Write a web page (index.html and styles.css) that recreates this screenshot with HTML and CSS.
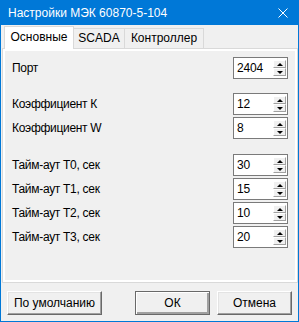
FILE: index.html
```html
<!DOCTYPE html>
<html lang="ru">
<head>
  <meta charset="UTF-8">
  <title>Настройки МЭК 60870-5-104</title>
  <link rel="stylesheet" href="styles.css">
</head>
<body>
  <div class="window">
    <div class="titlebar">
      <span class="title">Настройки МЭК 60870-5-104</span>
      <svg class="close" width="10" height="10" viewBox="0 0 10 10">
        <path d="M0.5 0.5 L9.5 9.5 M9.5 0.5 L0.5 9.5" stroke="#fff" stroke-width="1" fill="none"/>
      </svg>
    </div>

    <div class="tabs">
      <div class="tab active tab-main">Основные</div>
      <div class="tab tab-scada">SCADA</div>
      <div class="tab tab-ctrl">Контроллер</div>
    </div>

    <div class="frame">
      <div class="page">
        <div class="group">
          <div class="row">
            <span class="label">Порт</span>
            <div class="spin"><span class="value">2404</span><div class="spin-btns"><span class="up"></span><span class="down"></span></div></div>
          </div>
        </div>

        <div class="group group-k">
          <div class="row">
            <span class="label">Коэффициент К</span>
            <div class="spin"><span class="value">12</span><div class="spin-btns"><span class="up"></span><span class="down"></span></div></div>
          </div>
          <div class="row">
            <span class="label">Коэффициент W</span>
            <div class="spin"><span class="value">8</span><div class="spin-btns"><span class="up"></span><span class="down"></span></div></div>
          </div>
        </div>

        <div class="group group-t">
          <div class="row">
            <span class="label">Тайм-аут T0, сек</span>
            <div class="spin"><span class="value">30</span><div class="spin-btns"><span class="up"></span><span class="down"></span></div></div>
          </div>
          <div class="row">
            <span class="label">Тайм-аут T1, сек</span>
            <div class="spin"><span class="value">15</span><div class="spin-btns"><span class="up"></span><span class="down"></span></div></div>
          </div>
          <div class="row">
            <span class="label">Тайм-аут T2, сек</span>
            <div class="spin"><span class="value">10</span><div class="spin-btns"><span class="up"></span><span class="down"></span></div></div>
          </div>
          <div class="row">
            <span class="label">Тайм-аут T3, сек</span>
            <div class="spin"><span class="value">20</span><div class="spin-btns"><span class="up"></span><span class="down"></span></div></div>
          </div>
        </div>
      </div>
    </div>

    <div class="buttons">
      <button class="btn btn-default">По умолчанию</button>
      <button class="btn btn-ok">ОК</button>
      <button class="btn btn-cancel">Отмена</button>
    </div>
  </div>
</body>
</html>
```

FILE: styles.css
```css
:root {
  --win-blue: #0078d7;
  --face: #f0f0f0;
  --tab-border: #d9d9d9;
  --shadow: #a0a0a0;
  --dark-shadow: #696969;
}
* { margin: 0; padding: 0; box-sizing: border-box; }
body {
  font-family: 'Liberation Sans', Arial, sans-serif;
  font-size: 12px;
  color: #000;
  background: #fff;
}

.window {
  width: 299px;
  height: 322px;
  background: var(--face);
  border: 1px solid var(--win-blue);
  border-top: 0;
  display: flex;
  flex-direction: column;
}

/* title bar */
.titlebar {
  height: 25px;
  background: var(--win-blue);
  color: #fff;
  display: flex;
  align-items: center;
  padding-left: 7px;
}
.title { font-size: 12px; }
.close { margin-left: auto; margin-right: 10px; }

/* tabs */
.tabs {
  display: flex;
  align-items: flex-end;
  height: 23px;
  margin-top: 1px;
  margin-bottom: -1px;
  padding-left: 3px;
  position: relative;
  z-index: 1;
}
.tab {
  height: 20px;
  margin-bottom: 1px;
  margin-left: -1px;
  background: var(--face);
  border: 1px solid var(--tab-border);
  border-bottom: 0;
  text-align: center;
  line-height: 19px;
}
.tab.active {
  height: 23px;
  margin-bottom: 0;
  margin-left: 0;
  background: #fff;
  line-height: 21px;
}
.tab-main { width: 70px; }
.tab-scada { width: 52px; }
.tab-ctrl { width: 80px; }

.frame {
  height: 235px;
  margin-left: 1px;
  border: 1px solid var(--tab-border);
  background: #fff;
  padding: 2px;
}
.page {
  height: 100%;
  background: var(--face);
  padding: 6px 7px 0 7px;
}

.group { display: flex; flex-direction: column; gap: 2px; }
.group-k { margin-top: 14px; }
.group-t { margin-top: 15px; }
.row {
  height: 22px;
  display: flex;
  align-items: center;
  justify-content: space-between;
}
.label { letter-spacing: -0.3px; }

/* spin edit */
.spin {
  width: 55px;
  height: 22px;
  border: 1px solid #7a7a7a;
  background: #fff;
  display: flex;
  align-items: center;
}
.value { flex: 1; padding-left: 3px; letter-spacing: -0.15px; }
.spin-btns {
  width: 13px;
  margin-right: 1px;
  display: flex;
  flex-direction: column;
}
.spin-btns span {
  height: 8px;
  background: var(--face);
  border: 1px solid;
  border-color: #fff var(--shadow) var(--shadow) #fff;
  display: flex;
  align-items: center;
  justify-content: center;
}
.spin-btns span::after {
  content: '';
  width: 0;
  height: 0;
  border-left: 3px solid transparent;
  border-right: 3px solid transparent;
}
.spin-btns .up::after { border-bottom: 3px solid #000; }
.spin-btns .down::after { border-top: 3px solid #000; }

/* buttons */
.buttons {
  display: flex;
  margin-top: 8px;
  padding: 0 6px;
  gap: 7px;
}
.btn {
  height: 24px;
  width: 75px;
  font-family: inherit;
  font-size: 12px;
  color: #000;
  background: var(--face);
  border: 1px solid;
  border-color: #fff var(--dark-shadow) var(--dark-shadow) #fff;
  box-shadow: inset -1px -1px var(--shadow), inset 1px 1px #e3e3e3;
}
.btn-default { width: 95px; margin-right: auto; }
.btn-ok {
  border-color: var(--dark-shadow);
  box-shadow: inset 1px 1px #fff, inset -2px -2px var(--shadow);
}
```
